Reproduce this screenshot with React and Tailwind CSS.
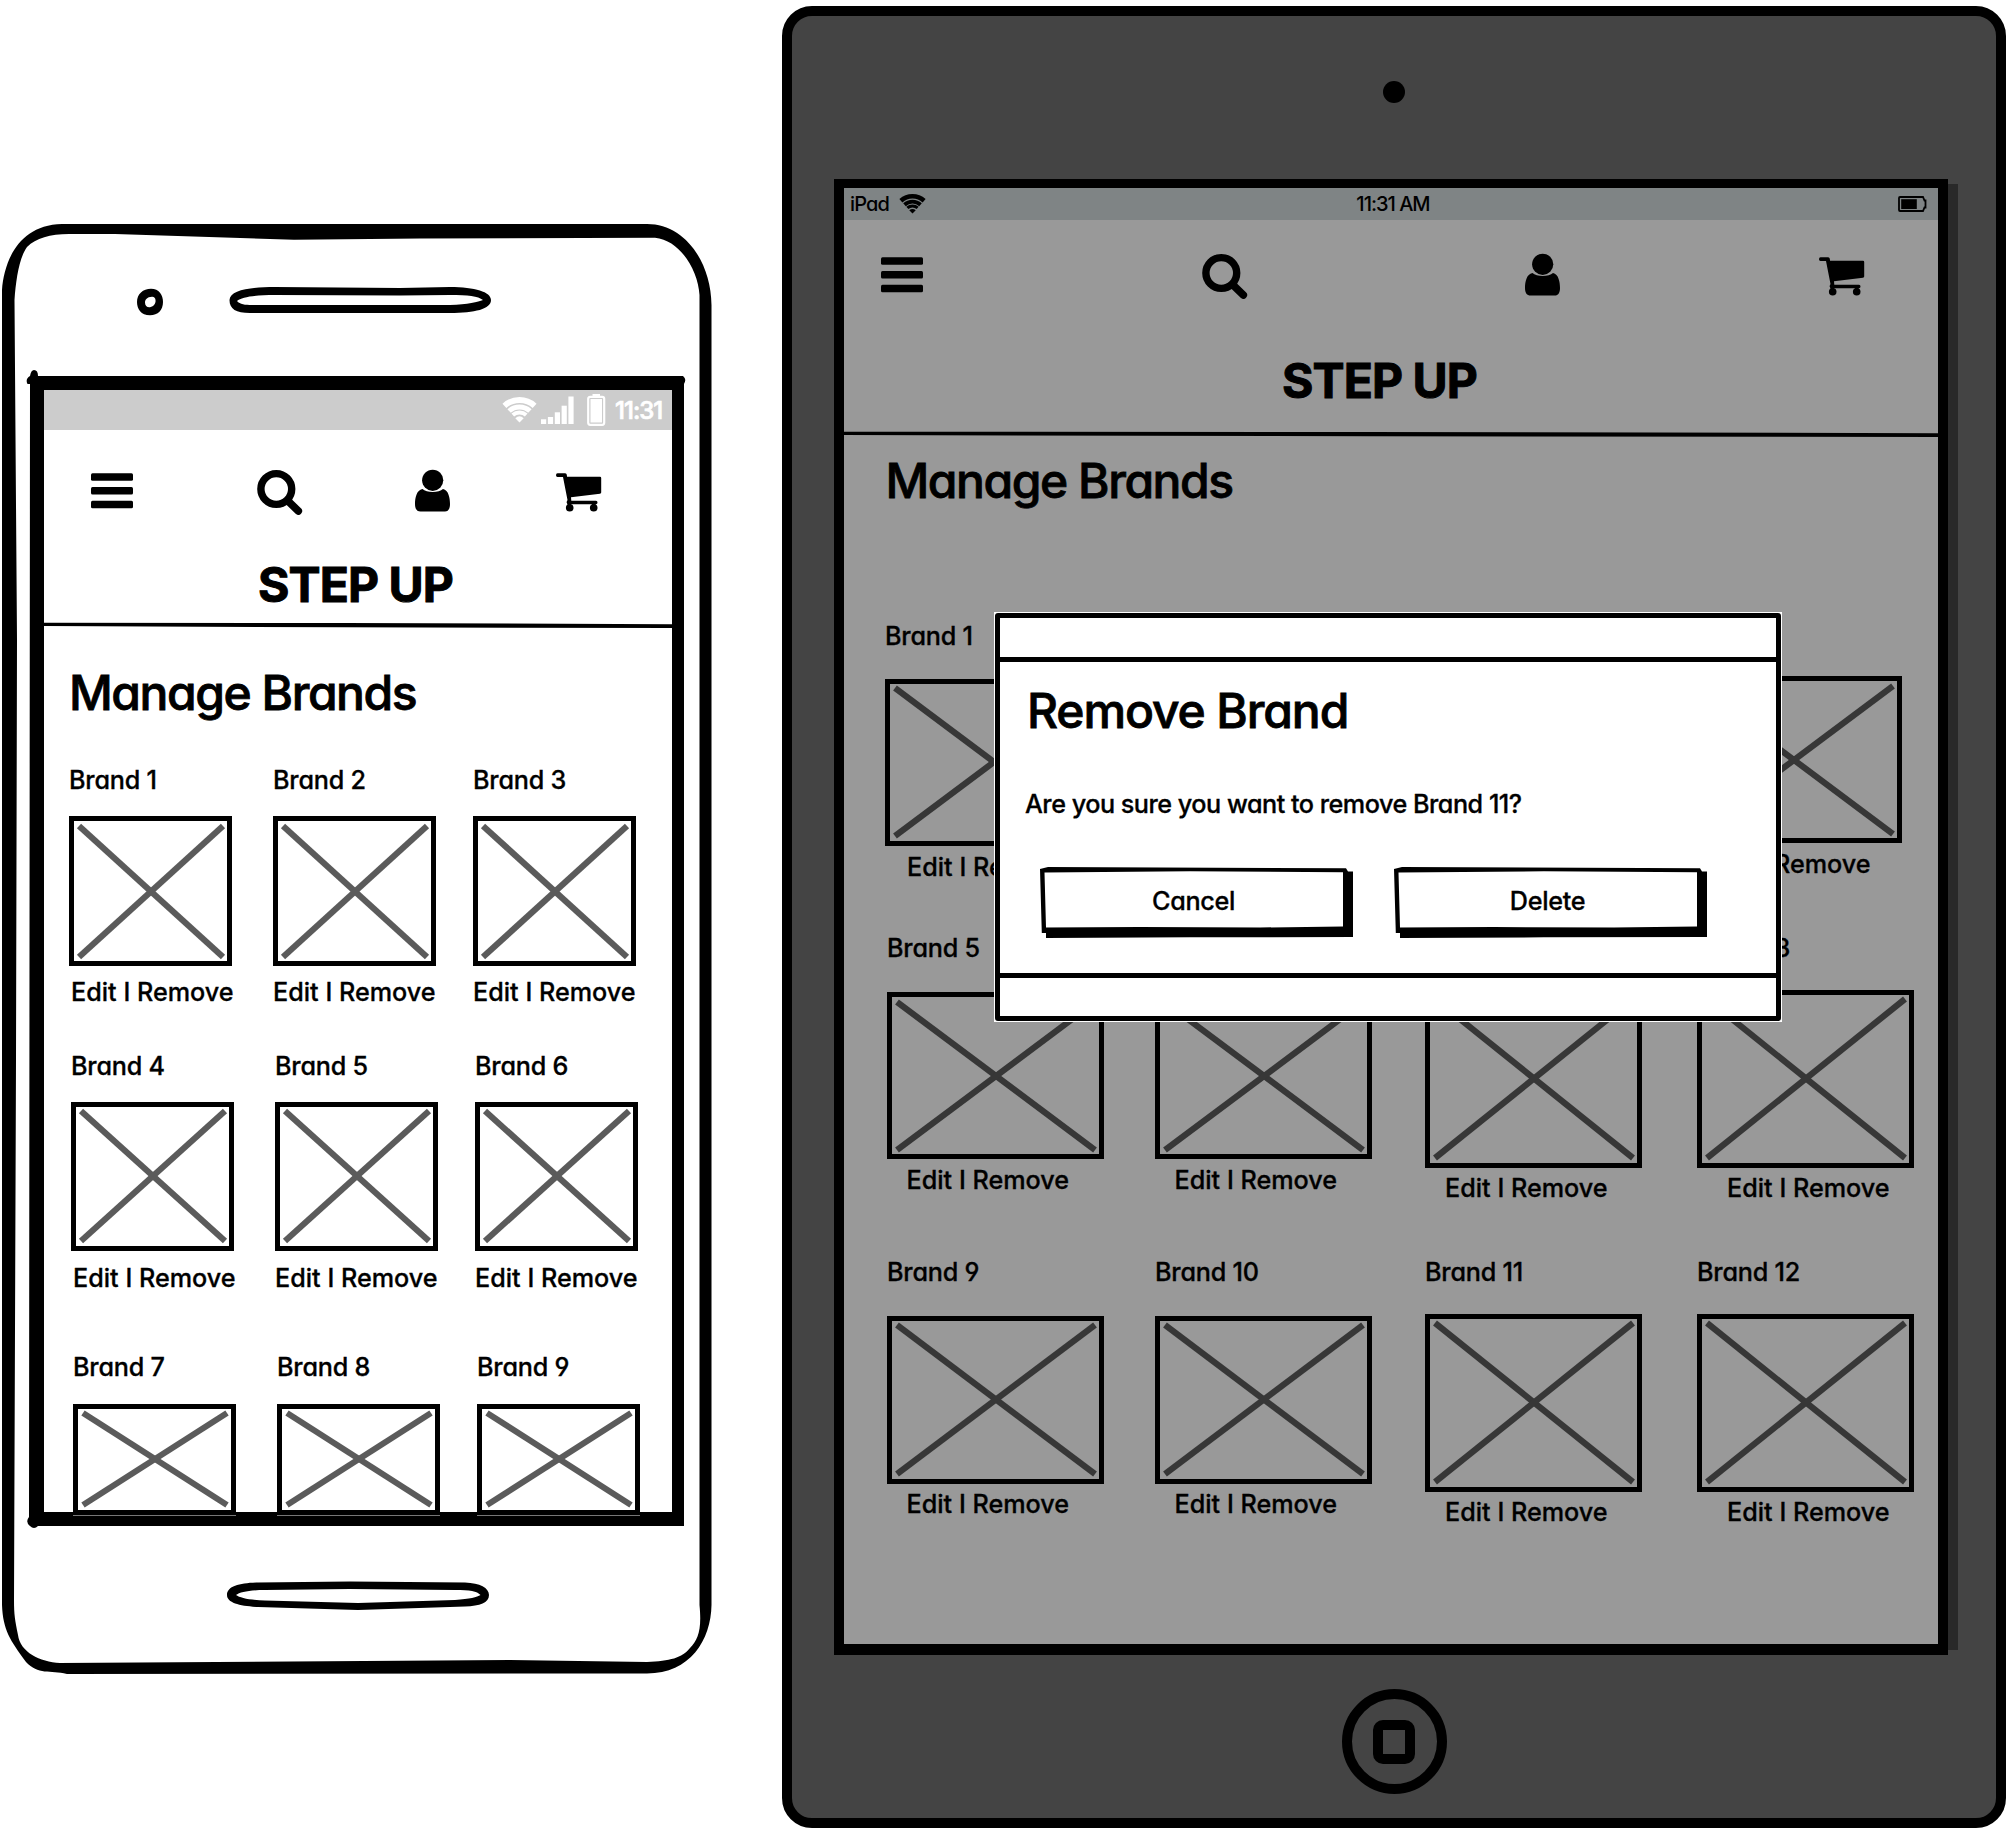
const INK = "whitespace-nowrap font-medium [font-feature-settings:'cv11','cv04','calt'_0]";
const BODY = "text-[25.2px] leading-[26px] [-webkit-text-stroke:0.3px_currentColor]";
const HEADING = "text-[48px] leading-[48px] [-webkit-text-stroke:0.8px_currentColor]";
const BRANDMARK = "text-[48px] leading-[48px] font-bold tracking-[-0.9px] whitespace-nowrap [-webkit-text-stroke:1px_currentColor]";

function MenuIcon() {
  return (
    <svg className="block h-[46px] w-[42px]" viewBox="0 0 42 46">
      <rect x="0" y="4.300" width="42" height="7.500" rx="1.500" />
      <rect x="0" y="18" width="42" height="7.500" rx="1.500" />
      <rect x="0" y="31.800" width="42" height="7.500" rx="1.500" />
    </svg>
  );
}

function SearchIcon() {
  return (
    <svg className="block h-[46px] w-[46px]" viewBox="0 0 46 46" fill="none" stroke="#000">
      <circle cx="19.3" cy="20" r="15.4" strokeWidth="7.4" />
      <path d="M31 32 L41.3 42" strokeWidth="7.6" strokeLinecap="round" />
    </svg>
  );
}

function UserIcon() {
  return (
    <svg className="block h-[46px] w-[35px]" viewBox="0 0 35 46">
      <circle cx="17.7" cy="11.3" r="10.6" />
      <path d="M7.5 20 C11.5 24 24 24 28 20 C33.500 21 35 29 35 35 C35 40 33 42.600 30 42.600 L5.500 42.600 C2 42.600 0 40 0 35 C0 29 1.500 21 7.500 20 Z" />
    </svg>
  );
}

function CartIcon() {
  return (
    <svg className="block h-[46px] w-[46px]" viewBox="0 0 46 46">
      <path d="M1.500 4.300 H9 Q11 4.300 11 7.700 H44 Q45.200 7.700 45.200 9 V23.500 Q45.200 24.600 44 24.800 L15 28.200 L15.300 31.700 H40 Q41.500 31.700 41.500 33.500 Q41.500 35.300 40 35.300 H12 Q9.500 34 11.500 31 L7 8 H1.500 Q0 8 0 6.200 Q0 4.300 1.500 4.300 Z" />
      <rect x="11.500" y="34" width="3.500" height="3" />
      <rect x="36" y="34" width="3.500" height="3" />
      <circle cx="13.700" cy="38.700" r="3.800" />
      <circle cx="37.700" cy="38.700" r="3.800" />
    </svg>
  );
}

function Wifi({ className }) {
  return (
    <svg className={className} viewBox="0 0 34 26" fill="none" stroke="currentColor">
      <path d="M1.900 8.800 A22.500 22.500 0 0 1 32.100 8.800" strokeWidth="5.800" />
      <path d="M6.600 14 A15.500 15.500 0 0 1 27.400 14" strokeWidth="5" />
      <path d="M10.300 18.100 A10 10 0 0 1 23.700 18.100" strokeWidth="4" />
      <path d="M17 25.500 L12.800 21.200 Q17 17.500 21.200 21.200 Z" fill="currentColor" stroke="none" />
    </svg>
  );
}

function Signal() {
  return (
    <svg className="ml-[4px] block h-[29px] w-[33px]" viewBox="0 0 33 29" fill="#fff">
      <rect x="0" y="23.300" width="5.200" height="4.700" />
      <rect x="6.900" y="21" width="5.200" height="7" />
      <rect x="13.800" y="16.300" width="5.200" height="11.700" />
      <rect x="20.600" y="9.700" width="5.200" height="18.300" />
      <rect x="27.400" y="0.500" width="5.200" height="27.500" />
    </svg>
  );
}

function PhoneBattery() {
  return (
    <svg className="ml-[13px] block h-[32px] w-[19px]" viewBox="0 0 19 32">
      <path d="M5.500 2.500 V0 H13 V2.500" fill="#fff" />
      <rect x="1.200" y="2.800" width="16" height="28" rx="2" fill="none" stroke="#fff" strokeWidth="2.200" />
      <rect x="3.500" y="5" width="11.500" height="23.500" fill="#fff" />
    </svg>
  );
}

function TabletBattery() {
  return (
    <svg className="block h-[16px] w-[29px]" viewBox="0 0 29 16">
      <path d="M2 1 H25 L26.500 4.500 H27.500 V11.500 H26.500 L25 15 H2 Q1 15 1 14 V2 Q1 1 2 1 Z" fill="none" stroke="#000" strokeWidth="1.800" />
      <rect x="3.200" y="3.200" width="15.600" height="9.800" />
    </svg>
  );
}

function Divider({ className }) {
  return (
    <svg className={className} viewBox="0 0 628 6" preserveAspectRatio="none">
      <path d="M0 0.800 L300 1 L628 2.200 V6 L300 5.300 L0 4 Z" />
    </svg>
  );
}

function Placeholder({ className, dark }) {
  return (
    <div className={`border-[5px] border-black p-[4.500px] ${className}`}>
      <svg className="block h-full w-full overflow-visible" stroke={dark ? "#373737" : "#5b5b5b"} strokeWidth="6.200">
        <line x1="0" y1="0" x2="100%" y2="100%" />
        <line x1="100%" y1="0" x2="0" y2="100%" />
      </svg>
    </div>
  );
}

function Card({ name, box, link, dark }) {
  return (
    <div className="flex flex-col items-start">
      <div className={`${INK} ${BODY} tracking-[-0.2px]`}>{name}</div>
      <Placeholder className={box} dark={dark} />
      {link && <div className={`${INK} ${BODY} ${link}`}>Edit I Remove</div>}
    </div>
  );
}

const phoneRows = [
  {
    grid: "mt-[50px] ml-[25px] grid grid-cols-[204px_200px_163px]",
    box: "mt-[23.500px] h-[150px] w-[163px] bg-white",
    names: ["Brand 1", "Brand 2", "Brand 3"],
    links: ["mt-[12.800px] ml-[2px]", "mt-[12.800px]", "mt-[12.800px]"],
  },
  {
    grid: "mt-[48.200px] ml-[27px] grid grid-cols-[204px_200px_163px]",
    box: "mt-[23px] h-[149px] w-[163px] bg-white",
    names: ["Brand 4", "Brand 5", "Brand 6"],
    links: ["mt-[14px] ml-[2px]", "mt-[14px]", "mt-[14px]"],
  },
  {
    grid: "mt-[63px] ml-[29px] grid grid-cols-[204px_200px_163px]",
    box: "mt-[24px] h-[111px] w-[163px] bg-white shadow-[0_1px_0_#777]",
    names: ["Brand 7", "Brand 8", "Brand 9"],
    links: [],
  },
];

const tabletRows = [
  {
    grid: "mt-[118px] ml-[41px] grid h-[258.300px] grid-cols-[268px_270px_262px_217px]",
    names: ["Brand 1", "Brand 2", "Brand 3", "Brand 4"],
    boxes: ["mt-[30px] h-[167px] w-[217px]", "mt-[30px] h-[167px] w-[217px]", "mt-[28px] h-[167px] w-[217px]", "mt-[27.700px] h-[167px] w-[217px]"],
    links: ["mt-[8.800px] ml-[22px]", "mt-[8.800px] ml-[19px]", "mt-[7.500px] ml-[21px]", "mt-[7.500px] ml-[23px]"],
  },
  {
    grid: "mt-[54px] ml-[43px] grid h-[265.600px] grid-cols-[268px_270px_272px_217px]",
    names: ["Brand 5", "Brand 6", "Brand 7", "Brand 8"],
    boxes: ["mt-[31.500px] h-[167px] w-[217px]", "mt-[31.500px] h-[167px] w-[217px]", "mt-[29px] h-[178px] w-[217px]", "mt-[29px] h-[178px] w-[217px]"],
    links: ["mt-[7.500px] ml-[19.500px]", "mt-[7.500px] ml-[19.500px]", "mt-[7.500px] ml-[20px]", "mt-[7.500px] ml-[30px]"],
  },
  {
    grid: "mt-[59px] ml-[43px] grid h-[266px] grid-cols-[268px_270px_272px_217px]",
    names: ["Brand 9", "Brand 10", "Brand 11", "Brand 12"],
    boxes: ["mt-[30.600px] h-[168px] w-[217px]", "mt-[30.600px] h-[168px] w-[217px]", "mt-[28.600px] h-[178px] w-[217px]", "mt-[28.600px] h-[178px] w-[217px]"],
    links: ["mt-[7.500px] ml-[19.500px]", "mt-[7.500px] ml-[19.500px]", "mt-[7.500px] ml-[20px]", "mt-[7.500px] ml-[30px]"],
  },
];

function PhoneShell() {
  return (
    <svg className="absolute inset-0 h-full w-full" viewBox="0 0 782 1832">
      <path
        fillRule="evenodd"
        d="M2 290 C4 262 18 225 62 224 H647 C685 224 711 262 711.500 305 V1605 C711 1640 690 1673.500 647 1673.500 L67 1674 C50 1670 38 1675 26 1662 C10 1640 3 1630 2 1605 Z
           M14.500 300 C16 280 19 258 27 247 C36 238 50 234 69 234 L115 234 L294 239.700 L420 238.500 L655 237.700 C680 240 698 270 699.500 295 V1605 C702 1630 698 1640 690 1648 C682 1658 670 1661 647 1662 L510 1660 L60 1663 C40 1662 20 1652 18 1635 C15 1620 14 1615 14 1600 L16 1060 L17 640 Z"
      />
      <path fillRule="evenodd" d="M30 384 H27.500 Q25 379 30 376 Q31 370 34 370 Q38 370 38 376 H683 Q687 379 684 384 V1526 H38 Q34 1530 30 1526 Q25 1522 29 1517 Z M44 390 V1512 H672 V390 Z" />
      <path fillRule="evenodd" d="M151 288.700 C159 288.700 163 295 163 302 C163 310 158 315.300 150 315.300 C141 315.300 137 309 137 302 C137 294 143 288.700 151 288.700 Z M152 296.700 C147 297 145 299.500 145 302.500 C145 306 147 307.500 150 307.200 C154 306.500 156 303 155.500 300 C155.500 298 154 296.500 152 296.700 Z" />
      <path fillRule="evenodd" d="M229.500 300 C230 290 250 287 275 287 L400 288 L450 287 C475 287 491 292 491 300 C491 309 475 313 450 313 H250 C236 313 229.500 309 229.500 300 Z M237 301 C240 304.500 245 305 252 305 H450 C468 304.500 478 302 483 300 C478 296 468 295 450 295 L400 295.500 L275 295 C255 295 242 297 237 301 Z" />
      <path fillRule="evenodd" d="M227 1595 C227 1586 240 1583 258 1582.500 L350 1581.500 L465 1582.500 C480 1583 489 1588 489 1595 C489 1603 480 1606 465 1606.500 L358 1610 L258 1607 C240 1606 227 1603 227 1595 Z M236 1595 C240 1598 250 1600 265 1600.500 L358 1603 L455 1600 C470 1599 477 1597 480.500 1595 C477 1591 470 1590 455 1590 L350 1589 L265 1590 C250 1590 240 1592 236 1595 Z" />
    </svg>
  );
}

function Phone() {
  return (
    <section className="relative h-[1832px] w-[782px] shrink-0">
      <PhoneShell />
      <div className="relative ml-[44px] w-[628px] pt-[390px]">
        <div className="flex h-[40px] items-center bg-[#ccc] pl-[458px] text-white">
          <Wifi className="block h-[26px] w-[35px]" />
          <Signal />
          <PhoneBattery />
          <span className={`${INK} ml-[9px] pt-[2px] text-[24px] tracking-[-1px] [-webkit-text-stroke:0.7px_currentColor]`}>11:31</span>
        </div>
        <nav className="flex pt-[39px] pl-[47px]">
          <MenuIcon />
          <div className="ml-[123.700px]"><SearchIcon /></div>
          <div className="ml-[112.500px]"><UserIcon /></div>
          <div className="ml-[106px]"><CartIcon /></div>
        </nav>
        <h1 className={`${BRANDMARK} mt-[46px] pl-[214px]`}>STEP UP</h1>
        <Divider className="mt-[13px] block h-[6px] w-[628px]" />
        <h2 className={`${INK} ${HEADING} mt-[40.500px] pl-[25px] tracking-[-1.450px]`}>Manage Brands</h2>
        {phoneRows.map((row) => (
          <div key={row.grid} className={row.grid}>
            {row.names.map((name, i) => (
              <Card key={name} name={name} box={row.box} link={row.links[i]} />
            ))}
          </div>
        ))}
      </div>
    </section>
  );
}

function Tablet() {
  return (
    <section className="mt-[6px] h-[1822px] w-[1224px] shrink-0 rounded-[30px] border-[10px] border-black bg-[#444]">
      <div className="mx-auto mt-[65px] size-[22px] rounded-full bg-black" />
      <div className="mt-[76px] ml-[42px] h-[1475.500px] w-[1114px] border-x-[10px] border-t-[9px] border-b-[11px] border-black bg-[#999] shadow-[15px_0_0_-5px_#292929]">
        <div className="grid h-[32px] grid-cols-3 items-center bg-[#7f8485] px-[6px]">
          <div className="flex items-center gap-[10.500px] pb-px">
            <span className={`${INK} text-[20px] tracking-[-0.9px]`}>iPad</span>
            <Wifi className="block h-[20px] w-[27px]" />
          </div>
          <div className={`${INK} pb-px pl-[4px] text-center text-[20px] tracking-[-1px]`}>11:31 AM</div>
          <div className="flex justify-end pr-[5px]"><TabletBattery /></div>
        </div>
        <nav className="flex pt-[33px] pl-[37px]">
          <MenuIcon />
          <div className="ml-[279px]"><SearchIcon /></div>
          <div className="ml-[277px]"><UserIcon /></div>
          <div className="ml-[258.500px]"><CartIcon /></div>
        </nav>
        <h1 className={`${BRANDMARK} mt-[57.500px] pl-[438px]`}>STEP UP</h1>
        <Divider className="mt-[26px] block h-[6px] w-full" />
        <h2 className={`${INK} ${HEADING} mt-[20px] pl-[41.500px] tracking-[-1.450px]`}>Manage Brands</h2>
        {tabletRows.map((row) => (
          <div key={row.grid} className={row.grid}>
            {row.names.map((name, i) => (
              <Card key={name} name={name} box={row.boxes[i]} link={row.links[i]} dark />
            ))}
          </div>
        ))}
      </div>
      <div className="mx-auto mt-[34.500px] flex size-[105px] items-center justify-center rounded-full border-[10px] border-black">
        <div className="h-[44px] w-[42px] rounded-[10px] border-[10px] border-black" />
      </div>
    </section>
  );
}

function SketchButton({ children }) {
  return (
    <button className="relative h-[71px] w-[313px]">
      <svg className="absolute inset-0 h-full w-full" viewBox="0 0 313 71">
        <path fillRule="evenodd" d="M0 2 L8 0 L306 1.200 L308 4.500 H313 V70 L150 70.300 L6 71 V66 H1.800 Z M4.500 5.500 L6 60.500 L100 60 L220 60.500 L303 59.500 V5.300 L150 4.300 Z" />
      </svg>
      <span className={`${INK} ${BODY} relative block pr-[5px] pb-[2px] tracking-[-0.3px]`}>{children}</span>
    </button>
  );
}

function RemoveDialog() {
  return (
    <div role="dialog" className="absolute top-[612px] left-[994px] h-[410px] w-[788px] bg-white p-[1px]">
      <div className="flex h-full flex-col rounded-[3px] border-[5px] border-black">
        <div className="h-[44px] shrink-0 border-b-[5px] border-black" />
        <div className="grow">
          <h2 className={`${INK} ${HEADING} mt-[24.500px] ml-[27px] tracking-[-1.100px]`}>Remove Brand</h2>
          <p className={`${INK} ${BODY} mt-[56px] ml-[25px] tracking-[-0.490px]`}>Are you sure you want to remove Brand 11?</p>
          <div className="mt-[50px] ml-[39.500px] flex gap-[41px]">
            <SketchButton>Cancel</SketchButton>
            <SketchButton>Delete</SketchButton>
          </div>
        </div>
        <div className="h-[43.500px] shrink-0 border-t-[5px] border-black" />
      </div>
    </div>
  );
}

export default function App() {
  return (
    <main className="relative flex h-[1832px] w-[2010px] overflow-hidden bg-white font-['Inter',sans-serif] text-black">
      <Phone />
      <Tablet />
      <RemoveDialog />
    </main>
  );
}
